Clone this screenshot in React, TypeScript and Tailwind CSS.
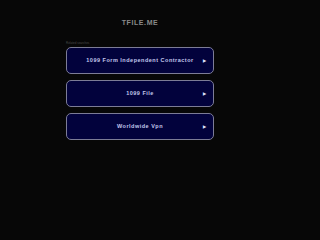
const links = ['1099 Form Independent Contractor', '1099 File', 'Worldwide Vpn'];

export default function App() {
  return (
    <div className="min-h-screen w-full bg-[#070707] font-['Liberation_Sans',Arial,sans-serif]">
      <div className="h-[202px] w-[280px] overflow-hidden">
        <div className="flex justify-center pt-[19px]">
          <h1 className="text-[7px] leading-[8px] font-bold tracking-[0.6px] text-[#8a8a8a]">TFILE.ME</h1>
        </div>
        <div className="mx-auto mt-[15px] w-[148px]">
          <div className="text-[3px] leading-[3px] text-[#4a4a4a]">Related searches</div>
          <div className="mt-[2px] flex flex-col gap-[6px]">
            {links.map((label) => (
              <a
                key={label}
                href="#"
                className="relative flex h-[27px] items-center justify-center rounded-[5px] border border-[#7c7c96] bg-[#02023c] text-[5.5px] font-bold tracking-[0.5px] text-[#c3c8ec]"
              >
                {label}
                <span className="absolute right-[7px] text-[4px] text-[#dfe4ff]">▶</span>
              </a>
            ))}
          </div>
        </div>
      </div>
    </div>
  );
}
